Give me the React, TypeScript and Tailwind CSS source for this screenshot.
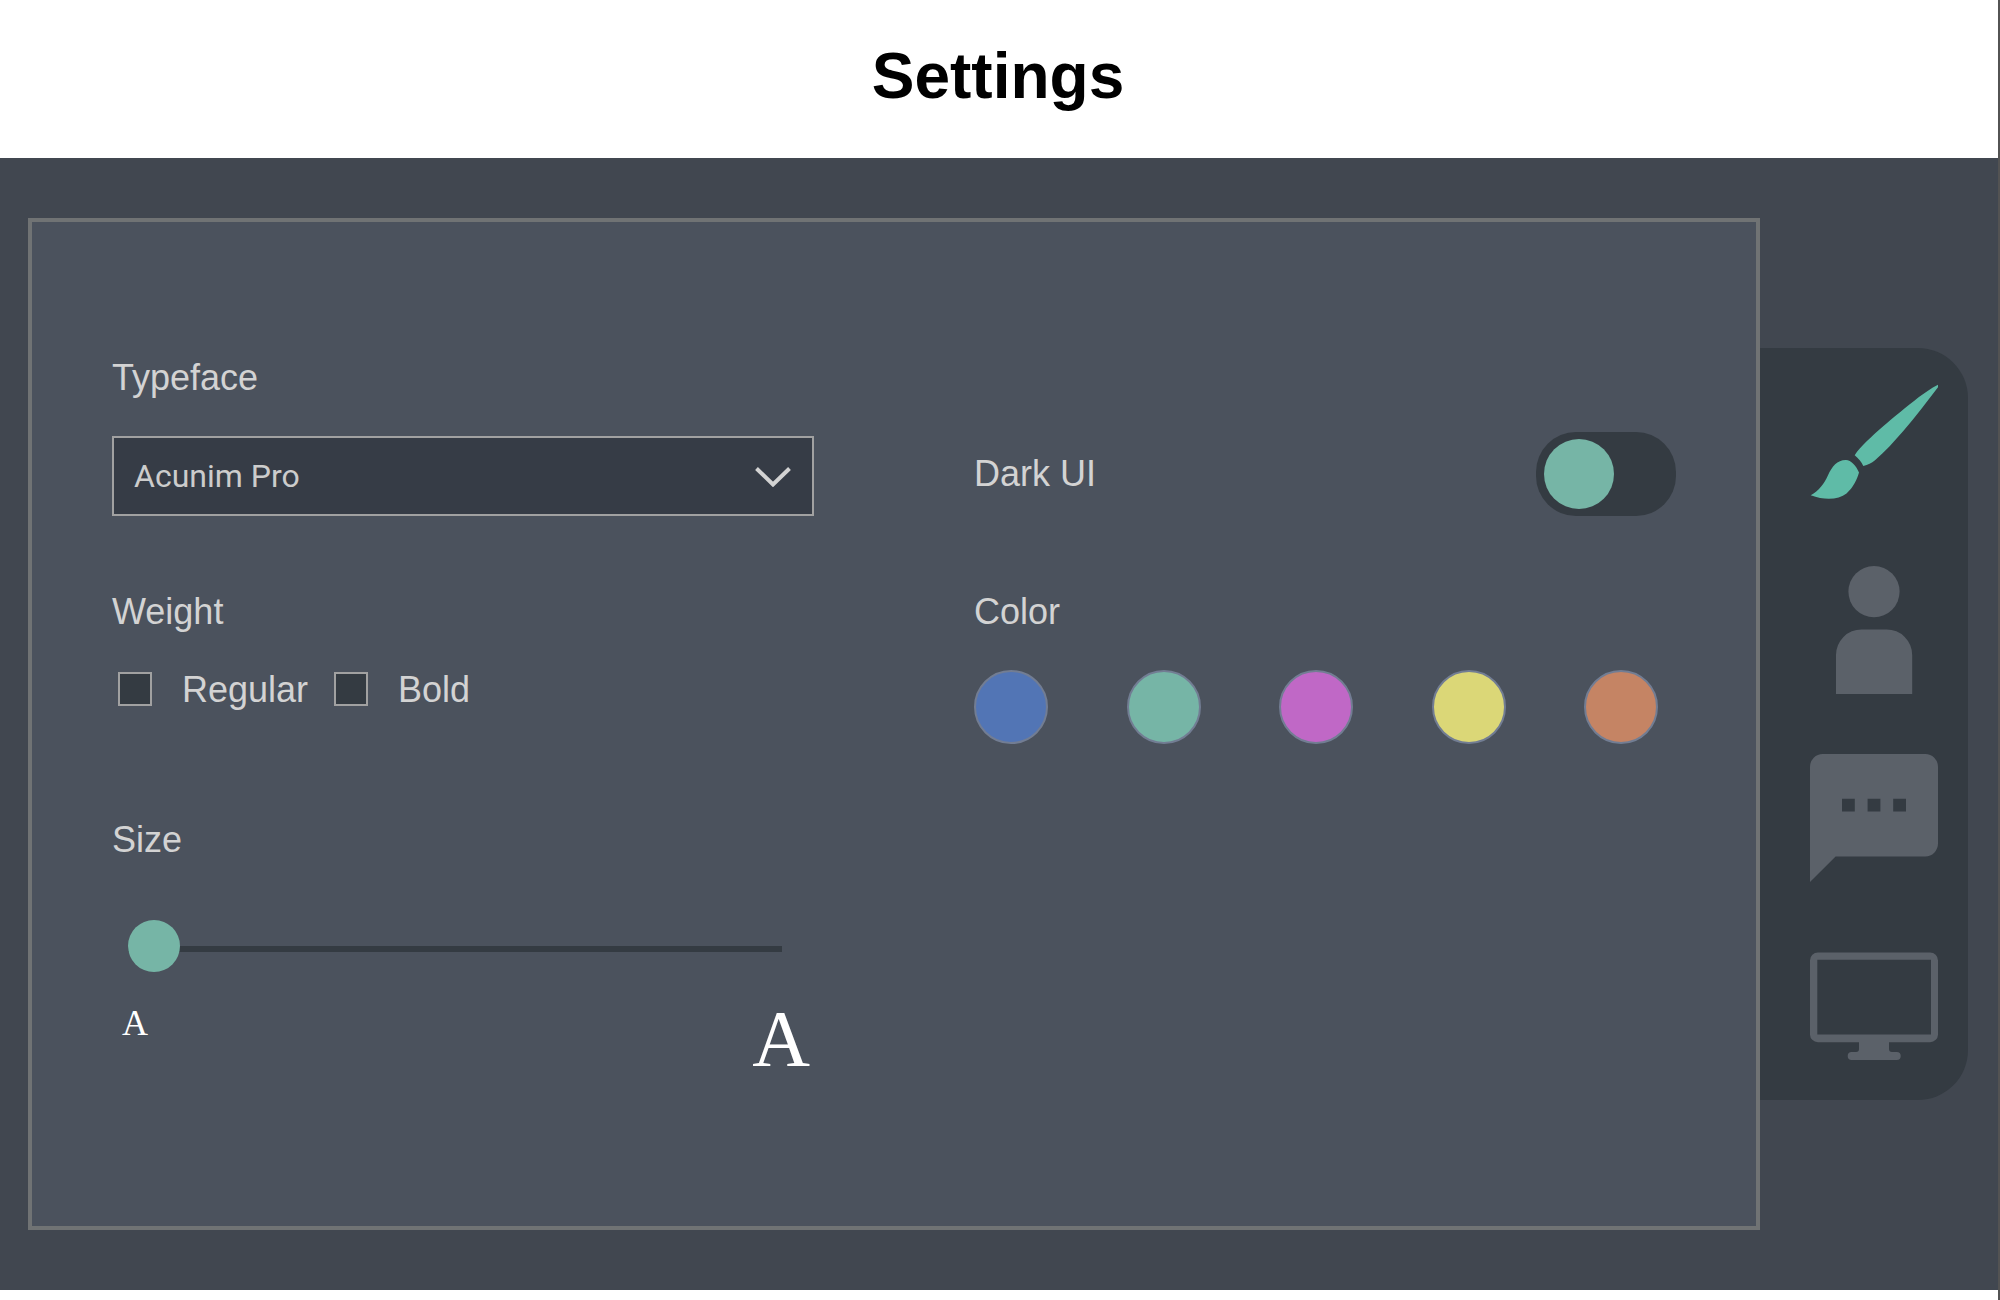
import { useState } from "react";
import type { ReactNode } from "react";

const swatches = [
  { name: "Blue", fill: "bg-[#5275b5]" },
  { name: "Green", fill: "bg-[#76b5a6]" },
  { name: "Pink", fill: "bg-[#c068c6]" },
  { name: "Yellow", fill: "bg-[#dbd777]" },
  { name: "Orange", fill: "bg-[#c58464]" },
];

const icons: { name: string; active?: boolean; art: ReactNode }[] = [
  {
    name: "Appearance",
    active: true,
    art: (
      <>
        <path d="M128 6.800C114 14 103 24 90 34.200C77 44.500 67 53.500 56.700 63.200C51.500 68.500 47.500 72.500 44.700 77.300C48.500 80.500 51.500 84 53.300 88C58 86.800 61.500 85.300 65 82.300C75 73.800 84 63.500 93.300 53C106 38 117 23.500 128 9.200Z" />
        <path d="M36 82C41 82.300 46 87.300 49 94.600C47.200 101.300 43.200 109.700 36.500 115.500C28.500 121.700 15 122.700 0.700 117.200C9 112.500 14 106 18 97.200C22 88.300 27.500 81.800 36 82Z" />
      </>
    ),
  },
  {
    name: "Profile",
    art: (
      <>
        <circle cx="64" cy="25.6" r="25.6" />
        <path d="M26 128V89A25.600 25.600 0 0 1 51.600 63.400H76.600A25.600 25.600 0 0 1 102.200 89V128Z" />
      </>
    ),
  },
  {
    name: "Messages",
    art: (
      <path
        fillRule="evenodd"
        d="M12.800 0H115.200A12.800 12.800 0 0 1 128 12.800V89.600A12.800 12.800 0 0 1 115.200 102.400H25.600L0 128V12.800A12.800 12.800 0 0 1 12.800 0ZM32 44.800V57.600H44.800V44.800ZM57.600 44.800V57.600H70.400V44.800ZM83.200 44.800V57.600H96V44.800Z"
      />
    ),
  },
  {
    name: "Display",
    art: (
      <>
        <path
          fillRule="evenodd"
          d="M8 10.400H120A8 8 0 0 1 128 18.400V92A8 8 0 0 1 120 100.300H8A8 8 0 0 1 0 92V18.400A8 8 0 0 1 8 10.400ZM7.300 17.700V92.500H121V17.700Z"
        />
        <path d="M49 99H79V107Q79 110 82 110H86.700A4 4 0 0 1 86.700 118H41.700A4 4 0 0 1 41.700 110H46Q49 110 49 107Z" />
      </>
    ),
  },
];

export default function App() {
  const [weights, setWeights] = useState<string[]>([]);
  const [size, setSize] = useState(0);

  const toggleWeight = (w: string) =>
    setWeights((cur) => (cur.includes(w) ? cur.filter((x) => x !== w) : [...cur, w]));

  return (
    <div className="min-h-screen border-r-2 border-[#535353] bg-white font-['Liberation_Sans',Arial,sans-serif] text-4xl leading-10 text-[#d3d3d3]">
      <header className="pt-[39px] pr-0.5 pb-[45px]">
        <h1 className="text-center text-[64px] leading-[74px] font-bold text-black">Settings</h1>
      </header>

      <main className="flex items-center bg-[#414750] py-[60px] pr-[30px] pl-7">
        <section className="grid flex-1 grid-cols-2 gap-x-40 border-4 border-[#707374] bg-[#4b525d] px-20 pb-[147px]">
          <div className="flex flex-col pt-[136px]">
            <label htmlFor="typeface">Typeface</label>
            <div className="relative mt-[38px]">
              <select
                id="typeface"
                className="block h-20 w-full appearance-none rounded-none border-2 border-[#a1a1a1] bg-[#363c46] px-5 font-[Roboto,sans-serif] text-[32px] leading-10 text-[#cccccc]"
              >
                <option>Acunim Pro</option>
              </select>
              <svg
                aria-hidden="true"
                viewBox="0 0 36 20"
                className="pointer-events-none absolute top-[31px] right-[23px] h-5 w-9 fill-none stroke-[#d3d3d3]"
              >
                <path d="M1.500 1.500L18 17.500L34.500 1.500" strokeWidth="4" />
              </svg>
            </div>

            <fieldset className="mt-[76px]">
              <legend>Weight</legend>
              <div className="mt-[38px] flex gap-[26px] pl-1.5">
                {["Regular", "Bold"].map((w) => (
                  <label key={w} className="flex items-start gap-[30px]">
                    <input
                      type="checkbox"
                      checked={weights.includes(w)}
                      onChange={() => toggleWeight(w)}
                      className="mt-0.5 size-[34px] appearance-none border-2 border-[#a1a1a1] bg-[#343b42] checked:bg-[#76b5a6]"
                    />
                    {w}
                  </label>
                ))}
              </div>
            </fieldset>

            <label htmlFor="size" className="mt-[110px]">
              Size
            </label>
            <input
              id="size"
              type="range"
              min={0}
              max={100}
              value={size}
              onChange={(e) => setSize(Number(e.target.value))}
              className="mt-[63px] mr-8 ml-4 block h-[52px] appearance-none bg-transparent [&::-webkit-slider-runnable-track]:h-1.5 [&::-webkit-slider-runnable-track]:bg-[#343b42] [&::-webkit-slider-thumb]:-mt-[26px] [&::-webkit-slider-thumb]:size-[52px] [&::-webkit-slider-thumb]:appearance-none [&::-webkit-slider-thumb]:rounded-full [&::-webkit-slider-thumb]:bg-[#76b5a6]"
            />
            <div className="mt-6 flex items-start justify-between pr-1 pl-2.5 font-['Liberation_Serif',serif] text-white">
              <span className="pt-1 leading-10">A</span>
              <span className="text-[80px] leading-[80px]">A</span>
            </div>
          </div>

          <div className="flex flex-col pt-[210px]">
            <div className="flex items-center justify-between">
              <label htmlFor="dark-ui">Dark UI</label>
              <input
                id="dark-ui"
                type="checkbox"
                role="switch"
                className="flex h-[84px] w-[140px] appearance-none items-center rounded-[40px] bg-[#343b42] px-2 before:size-[70px] before:rounded-full before:bg-[#76b5a6] before:content-[''] checked:justify-end"
              />
            </div>

            <fieldset className="mt-[76px]">
              <legend>Color</legend>
              <div className="mt-[38px] mr-[18px] flex justify-between">
                {swatches.map((s) => (
                  <button
                    key={s.name}
                    type="button"
                    aria-label={s.name}
                    className={`size-[74px] rounded-full border-2 border-[#727d93] ${s.fill}`}
                  />
                ))}
              </div>
            </fieldset>
          </div>
        </section>

        <nav className="flex flex-col rounded-r-[50px] bg-[#343b42]">
          {icons.map((icon) => (
            <button key={icon.name} type="button" aria-label={icon.name} className="py-[30px] pr-[30px] pl-[50px]">
              <svg
                viewBox="0 0 128 128"
                className={icon.active ? "size-32 fill-[#5fbba7]" : "size-32 fill-[#5b6169]"}
              >
                {icon.art}
              </svg>
            </button>
          ))}
        </nav>
      </main>
    </div>
  );
}
